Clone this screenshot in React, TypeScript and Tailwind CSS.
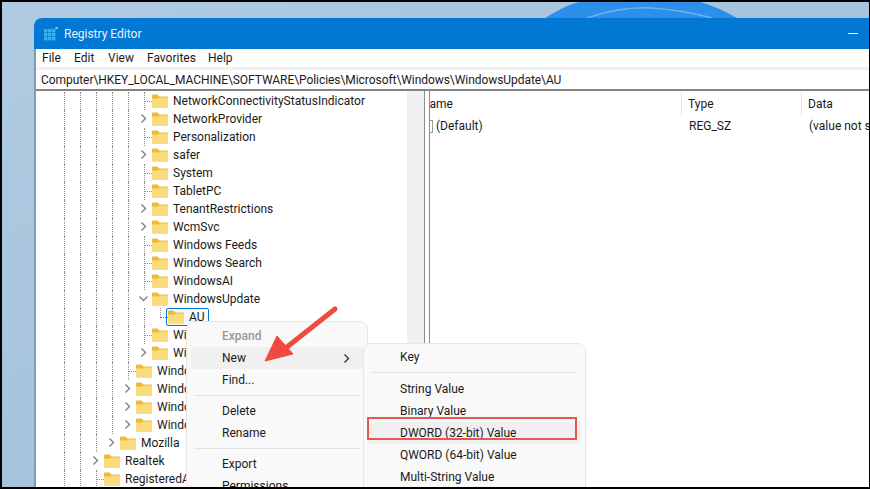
const font = { fontFamily: 'Roboto, "Noto Sans", sans-serif' };

type Row = { label: string; depth: number; arrow?: 'right' | 'down'; selected?: boolean; last?: boolean };

const rows: Row[] = [
  { label: 'NetworkConnectivityStatusIndicator', depth: 3 },
  { label: 'NetworkProvider', depth: 3, arrow: 'right' },
  { label: 'Personalization', depth: 3 },
  { label: 'safer', depth: 3, arrow: 'right' },
  { label: 'System', depth: 3 },
  { label: 'TabletPC', depth: 3 },
  { label: 'TenantRestrictions', depth: 3, arrow: 'right' },
  { label: 'WcmSvc', depth: 3, arrow: 'right' },
  { label: 'Windows Feeds', depth: 3 },
  { label: 'Windows Search', depth: 3 },
  { label: 'WindowsAI', depth: 3 },
  { label: 'WindowsUpdate', depth: 3, arrow: 'down' },
  { label: 'AU', depth: 4, selected: true, last: true },
  { label: 'WindowsInkWorkspace', depth: 3 },
  { label: 'WindowsRuntime', depth: 3, arrow: 'right' },
  { label: 'Windows Defender', depth: 2 },
  { label: 'Windows NT', depth: 2, arrow: 'right' },
  { label: 'WindowsStore', depth: 2, arrow: 'right' },
  { label: 'Windows Server', depth: 2, arrow: 'right' },
  { label: 'Mozilla', depth: 1, arrow: 'right' },
  { label: 'Realtek', depth: 0, arrow: 'right' },
  { label: 'RegisteredApplications', depth: 0 },
];

const Folder = () => (
  <svg width="16" height="14" viewBox="0 0 16 14" className="shrink-0">
    <path d="M0 1.5Q0 .5 1 .5H5.5L7.5 2.5H15Q16 2.5 16 3.5V12.5Q16 13.5 15 13.5H1Q0 13.5 0 12.5Z" fill="#f0b93a" />
    <path d="M0 4.5H6.5L8 3.5H15Q16 3.5 16 4.5V12.5Q16 13.5 15 13.5H1Q0 13.5 0 12.5Z" fill="#fbdc7c" />
  </svg>
);

const Chevron = ({ down, color = '#808080' }: { down?: boolean; color?: string }) => (
  <svg width="9" height="9" viewBox="0 0 9 9" fill="none" stroke={color} strokeWidth="1.4">
    <path d={down ? 'M.5 2.5 4.5 6.5 8.5 2.5' : 'M2.5 .5 6.5 4.5 2.5 8.5'} />
  </svg>
);

const TreeRow = ({ row }: { row: Row }) => (
  <div className="flex h-[18px] items-center pl-[28px]">
    {Array.from({ length: row.depth + 2 }).map((_, i) => (
      <div key={i} className="h-full w-4 shrink-0 border-l border-dotted border-[#8c8c8c]" />
    ))}
    <div className="relative h-full w-2 shrink-0">
      {row.arrow ? (
        <div className="absolute left-[-5px] top-[4px]">
          <Chevron down={row.arrow === 'down'} />
        </div>
      ) : (
        <div className={`flex h-full border-l border-dotted border-[#8c8c8c] ${row.last ? 'max-h-[9px]' : ''}`}>
          <div className="mt-[9px] h-0 w-full border-t border-dotted border-[#8c8c8c]" />
        </div>
      )}
      {row.last && <div className="absolute left-0 top-[9px] h-0 w-2 border-t border-dotted border-[#8c8c8c]" />}
    </div>
    {row.selected ? (
      <div className="ml-[-2px] flex h-[18px] items-center gap-[5px] rounded-[2px] border border-[#0078d4] bg-[#f4fafe] pl-px pr-[3px]">
        <Folder />
        <span className="text-[#1a1a1a]">{row.label}</span>
      </div>
    ) : (
      <div className="flex items-center gap-[5px] whitespace-nowrap">
        <Folder />
        <span className="text-[#1a1a1a]">{row.label}</span>
      </div>
    )}
  </div>
);

const MenuItem = ({ label, active, disabled, more, pad = 'pl-[31px]' }: { label: string; active?: boolean; disabled?: boolean; more?: boolean; pad?: string }) => (
  <div className={`flex h-[22px] items-center justify-between rounded-[3px] pr-[12px] ${pad} ${active ? 'bg-[#f0f0f0]' : ''} ${disabled ? 'font-medium text-[#9a9a9a]' : 'text-[#1a1a1a]'}`}>
    <span className="whitespace-nowrap">{label}</span>
    {more && <Chevron color="#333333" />}
  </div>
);

const Sep = () => <div className="mx-[3px] my-[4px] h-px bg-[#e3e3e3]" />;

export default function App() {
  return (
    <div className="h-[489px] w-[870px] overflow-hidden bg-black pb-[2px] pl-[2px] pr-px pt-[2px] text-[12px] leading-[18px]" style={font}>
      <div className="relative flex h-full flex-col overflow-hidden bg-gradient-to-br from-[#b0cbe1] via-[#a5c3dc] to-[#8eb2cf] pl-8 pt-4">
        {/* wallpaper bloom */}
        <svg width="867" height="16" className="absolute left-0 top-0">
          <path d="M543 16Q568 1 578 0H698Q716 5 735 16Z" fill="#2c8fe9" />
          <path d="M585 16Q620 4 650 6T710 16" fill="none" stroke="#6cb4f0" strokeWidth="1.5" />
        </svg>

        <div className="relative flex min-h-0 flex-1 flex-col overflow-hidden rounded-tl-lg bg-white">
          <div className="flex h-[31px] shrink-0 items-center bg-[#0078d4] pl-[10px] pr-[11px]">
            <svg width="14" height="14" viewBox="0 0 14 14" fill="#35b3e8">
              <rect x="0" y="2" width="3.4" height="3.4" />
              <rect x="4" y="2" width="3.4" height="3.4" />
              <rect x="8" y="2" width="3.4" height="3.4" />
              <rect x="0" y="6" width="3.4" height="3.4" />
              <rect x="4" y="6" width="3.4" height="3.4" />
              <rect x="8" y="6" width="3.4" height="3.4" />
              <rect x="0" y="10" width="3.4" height="3.4" />
              <rect x="4" y="10" width="3.4" height="3.4" />
              <rect x="8" y="10" width="3.4" height="3.4" />
              <rect x="11.5" y="0" width="2" height="2" fill="#8fdcf5" />
            </svg>
            <span className="ml-[6px] text-[#e6f2fb]">Registry Editor</span>
            <div className="ml-auto h-px w-[10px] bg-white" />
          </div>

          <div className="flex min-h-0 flex-1 flex-col border-l-2 border-[#7f9db5]">
            <div className="flex h-[18px] shrink-0 items-center pl-[6px] text-[#1a1a1a]">
              <span className="w-[32px]">File</span>
              <span className="w-[34px]">Edit</span>
              <span className="w-[39px]">View</span>
              <span className="w-[61px]">Favorites</span>
              <span>Help</span>
            </div>
            <div className="h-[3px] shrink-0 bg-[#f0f0f0]" />
            <div className="flex h-[21px] shrink-0 items-center border-b-2 border-[#858585] pl-[5px] tracking-[-0.06px] text-[#1a1a1a]">
              Computer\HKEY_LOCAL_MACHINE\SOFTWARE\Policies\Microsoft\Windows\WindowsUpdate\AU
            </div>

            <div className="flex min-h-0 flex-1">
              <div className="w-[371px] shrink-0 overflow-hidden pt-px">
                {rows.map((r) => (
                  <TreeRow key={r.label} row={r} />
                ))}
              </div>
              <div className="w-[17px] shrink-0 bg-[#f0f0f0]" />
              <div className="w-[6px] shrink-0 border-x border-[#8c8c8c]" />
              <div className="min-w-0 flex-1 overflow-hidden pt-px text-[#1a1a1a]">
                <div className="flex h-[24px] items-center">
                  <div className="ml-[-12px] flex h-full w-[264px] shrink-0 items-center border-r border-[#e5e5e5] pl-[3px]">Name</div>
                  <div className="flex h-full w-[120px] shrink-0 items-center border-r border-[#e5e5e5] pl-[6px]">Type</div>
                  <div className="whitespace-nowrap pl-[6px]">Data</div>
                </div>
                <div className="flex h-[20px] items-center whitespace-nowrap">
                  <div className="flex w-[252px] shrink-0 items-center">
                    <div className="h-[13px] w-[3px] rounded-r-[1px] border-y border-r border-[#9a9a9a]" />
                    <span className="ml-[3px]">(Default)</span>
                  </div>
                  <div className="w-[120px] shrink-0 pl-[7px]">REG_SZ</div>
                  <div className="pl-[7px]">(value not set)</div>
                </div>
              </div>
            </div>
          </div>
        </div>

        {/* context menu */}
        <div className="absolute left-[184px] top-[319px] h-[190px] w-[182px] rounded-lg border border-[#e6e6e6] bg-[#f9f9f9] p-[4px] pt-[3px]">
          <MenuItem label="Expand" disabled />
          <MenuItem label="New" active more />
          <MenuItem label="Find..." />
          <Sep />
          <MenuItem label="Delete" />
          <MenuItem label="Rename" />
          <Sep />
          <MenuItem label="Export" />
          <MenuItem label="Permissions..." />
        </div>

        {/* new submenu */}
        <div className="absolute left-[361px] top-[341px] h-[170px] w-[223px] rounded-lg border border-[#e6e6e6] bg-[#f9f9f9] px-[4px] pt-[2px]">
          <MenuItem label="Key" pad="pl-[32px]" />
          <div className="mx-[4px] mb-[5px] mt-[4px] h-px bg-[#e3e3e3]" />
          <MenuItem label="String Value" pad="pl-[32px]" />
          <MenuItem label="Binary Value" pad="pl-[32px]" />
          <MenuItem label="DWORD (32-bit) Value" active pad="pl-[32px]" />
          <MenuItem label="QWORD (64-bit) Value" pad="pl-[32px]" />
          <MenuItem label="Multi-String Value" pad="pl-[32px]" />
        </div>

        {/* annotation */}
        <div className="absolute left-[365px] top-[415px] h-[23px] w-[210px] border-2 border-[#e8574d]" />
        <svg width="80" height="62" viewBox="0 0 80 62" className="absolute left-[261px] top-[303px]">
          <path d="M72 4 24 42" stroke="#f0493e" strokeWidth="5" strokeLinecap="round" />
          <path d="M2 56 14 31 30 49Z" fill="#f0493e" stroke="#f0493e" strokeLinejoin="round" />
        </svg>
      </div>
    </div>
  );
}
